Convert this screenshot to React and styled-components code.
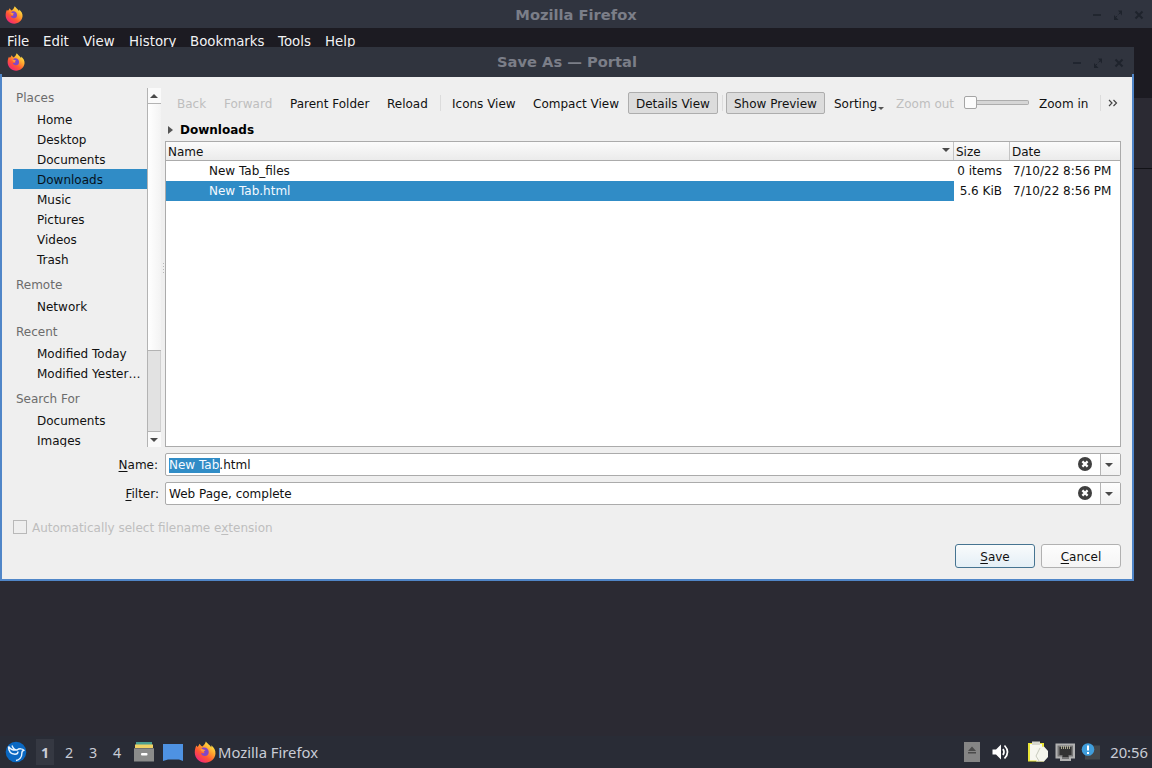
import React from "react";
import styled, { createGlobalStyle, css } from "styled-components";

const places = [
  { title: "Places", items: ["Home", "Desktop", "Documents", "Downloads", "Music", "Pictures", "Videos", "Trash"] },
  { title: "Remote", items: ["Network"] },
  { title: "Recent", items: ["Modified Today", "Modified Yester…"] },
  { title: "Search For", items: ["Documents", "Images"] },
];

const files = [
  { name: "New Tab_files", size: "0 items", date: "7/10/22 8:56 PM" },
  { name: "New Tab.html", size: "5.6 KiB", date: "7/10/22 8:56 PM", selected: true },
];

const menus = [
  ["File", 36],
  ["Edit", 40],
  ["View", 46],
  ["History", 61],
  ["Bookmarks", 88],
  ["Tools", 47],
  ["Help", 40],
];

function FirefoxIcon({ size }) {
  return (
    <svg width={size} height={size} viewBox="0 0 20 20">
      <defs>
        <linearGradient id="fox" x1="0.85" y1="0.1" x2="0.2" y2="0.95">
          <stop offset="0" stopColor="#fff14a" />
          <stop offset="0.35" stopColor="#ffa32e" />
          <stop offset="0.65" stopColor="#ff5634" />
          <stop offset="1" stopColor="#f0247e" />
        </linearGradient>
      </defs>
      <path
        d="M2.2 4.2C2.6 4.6 3 5 3.2 5.5C4 4.9 4.6 3.6 5.2 2.6C5.6 3.7 6.4 4.5 7.6 5C9 3.9 10 2.6 10.8 .4C12 1.9 13 2.8 14.2 3.8C14.8 4.3 15.3 5 15.6 5.8C15.9 5.2 15.8 4.5 15.6 3.8C18.2 5.8 19.8 8.4 19.5 11.5C19 16.3 15 19.7 10.2 19.7C5 19.7 .7 15.7 .7 10.4C.7 8.1 1.2 6 2.2 4.2Z"
        fill="url(#fox)"
      />
      <path
        d="M8 6C10.6 5.200 13.400 6.800 13.400 10C13.400 12.400 11.900 13.600 10 13.600C8 13.600 6.600 12.300 6.400 10.800C7.400 11.400 8.800 11.400 9.800 10.400C8.600 9.800 6.800 9.200 6.600 8C6.800 7.100 7.200 6.500 8 6Z"
        fill="#8147c8"
      />
      <path d="M6 7.400C7.400 7.200 9.400 7.800 10.400 8.600C9.500 8.800 8.900 9.200 8.800 10C7.400 9.900 6.300 9 6 7.400Z" fill="#ff9a3a" />
    </svg>
  );
}

function WindowControls() {
  return (
    <Controls viewBox="0 0 56 12">
      <path d="M2 6h8" stroke="#1e232c" strokeWidth="1.6" />
      <path d="M23 11V6L27.500 11ZM27 1.500H31V6.500Z" fill="#1e232c" />
      <path d="M24 9L30 3" stroke="#1e232c" strokeDasharray="3 2" />
      <path d="M44.500 2.500L51.500 9.500M51.500 2.500L44.500 9.500" stroke="#1e232c" strokeWidth="1.9" />
    </Controls>
  );
}

function Arrow({ up }) {
  return (
    <svg width="8" height="4" viewBox="0 0 8 4">
      <path d={up ? "M0 4L4 0L8 4Z" : "M0 0H8L4 4Z"} fill="#4a4a4a" />
    </svg>
  );
}

function Combo({ children }) {
  return (
    <ComboBox>
      <ComboText>{children}</ComboText>
      <ClearIcon viewBox="0 0 14 14">
        <circle cx="7" cy="7" r="7" fill="#3f3f3f" />
        <path d="M4.400 4.400L9.600 9.600M9.600 4.400L4.400 9.600" stroke="#fff" strokeWidth="2.200" />
      </ClearIcon>
      <ComboArrow>
        <Arrow />
      </ComboArrow>
    </ComboBox>
  );
}

function App() {
  return (
    <Desktop>
      <GlobalStyle />
      <Browser>
        <TitleBar $height={28} $pad={5}>
          <FirefoxIcon size={18} />
          <WindowTitle>Mozilla Firefox</WindowTitle>
          <WindowControls />
        </TitleBar>
        <MenuBar>
          {menus.map(([label, width]) => (
            <MenuItem key={label} $width={width}>{label}</MenuItem>
          ))}
        </MenuBar>
        <TabStrip />
        <NavBar />
        <Page />
      </Browser>

      <Dialog>
        <TitleBar $height={30} $pad={7} $framed>
          <FirefoxIcon size={18} />
          <WindowTitle>Save As — Portal</WindowTitle>
          <WindowControls />
        </TitleBar>
        <DialogBody>
          <Columns>
            <Sidebar>
              <PlaceList>
                {places.map((group, i) => (
                  <React.Fragment key={group.title}>
                    <GroupTitle $first={i === 0}>{group.title}</GroupTitle>
                    {group.items.map((item) => (
                      <Place key={item} $selected={item === "Downloads"}>{item}</Place>
                    ))}
                  </React.Fragment>
                ))}
              </PlaceList>
              <ScrollBar>
                <ScrollButton><Arrow up /></ScrollButton>
                <ScrollTrack />
                <ScrollRest />
                <ScrollButton><Arrow /></ScrollButton>
              </ScrollBar>
            </Sidebar>
            <Grip>
              <svg width="4" height="12" viewBox="0 0 4 12">
                <path d="M2.500 0v12" stroke="#b8b8b8" strokeDasharray="1 2" />
              </svg>
            </Grip>
            <Main>
              <ToolBar>
                <Tool $width={47} $disabled>Back</Tool>
                <Tool $width={66} $disabled>Forward</Tool>
                <Tool $width={97}>Parent Folder</Tool>
                <Tool $width={58}>Reload</Tool>
                <Separator $tight />
                <Tool $width={81}>Icons View</Tool>
                <Tool $width={104}>Compact View</Tool>
                <Tool $width={90} $pressed>Details View</Tool>
                <Separator />
                <Tool $width={99} $pressed>Show Preview</Tool>
                <Tool $width={62}>
                  Sorting
                  <SmallArrow viewBox="0 0 6 3"><path d="M0 0H6L3 3Z" /></SmallArrow>
                </Tool>
                <Tool $width={77} $disabled>Zoom out</Tool>
                <Slider>
                  <Knob />
                  <Groove />
                </Slider>
                <Tool $width={66}>Zoom in</Tool>
                <Separator />
                <More viewBox="0 0 10 8">
                  <path d="M1 1L4 4L1 7M5.500 1L8.500 4L5.500 7" />
                </More>
              </ToolBar>
              <Crumb>
                <svg width="5" height="8" viewBox="0 0 5 8"><path d="M0 0L5 4L0 8Z" fill="#555" /></svg>
                Downloads
              </Crumb>
              <FileList>
                <Header>
                  <HeaderCell>
                    Name
                    <Arrow />
                  </HeaderCell>
                  <HeaderCell>Size</HeaderCell>
                  <HeaderCell>Date</HeaderCell>
                </Header>
                {files.map((file) => (
                  <FileRow key={file.name}>
                    <FileName $selected={file.selected}>{file.name}</FileName>
                    <FileSize>{file.size}</FileSize>
                    <FileDate>{file.date}</FileDate>
                  </FileRow>
                ))}
              </FileList>
            </Main>
          </Columns>
          <Form>
            <Label $inset={1}><u>N</u>ame:</Label>
            <Combo><Marked>New Tab</Marked>.html</Combo>
            <Label $inset={0}><u>F</u>ilter:</Label>
            <Combo>Web Page, complete</Combo>
          </Form>
          <CheckRow>
            <CheckBox />
            <CheckLabel>Automatically select filename e<u>x</u>tension</CheckLabel>
          </CheckRow>
          <Buttons>
            <Button $primary><span><u>S</u>ave</span></Button>
            <Button><span><u>C</u>ancel</span></Button>
          </Buttons>
        </DialogBody>
      </Dialog>

      <TaskBar>
        <Launcher>
          <svg width="22" height="22" viewBox="0 0 22 22">
            <circle cx="11" cy="11" r="10.300" fill="#0a68c2" />
            <path
              d="M3.500 5.500C6 9 9 9.500 12 9C14 7.300 17.500 7.500 18.800 9.200C17.200 9.600 16.800 11 16.800 12.500C17 16 14.500 19 11 19.500M3.500 5.500C3.500 10 6 13 10 13.300C12 13.300 13 12 13 10.500M7 4.500C8 7.500 10 9 12 9"
              fill="none"
              stroke="#e8f4ff"
              strokeWidth="1.400"
            />
          </svg>
        </Launcher>
        <Pager>
          <Workspace $active>1</Workspace>
          <Workspace>2</Workspace>
          <Workspace>3</Workspace>
          <Workspace>4</Workspace>
        </Pager>
        <QuickLaunch>
          <svg width="20" height="20" viewBox="0 0 20 20">
            <path d="M2 0H18V4H2Z" fill="#4b9f91" />
            <path d="M1 2.500H19V6H1Z" fill="#f0d264" />
            <path d="M0 6H20V19.500H0Z" fill="#8b8c8b" />
            <path d="M0 6H20V7H0Z" fill="#6e6f6e" />
            <rect x="7" y="11" width="6.500" height="2.500" rx="1" fill="#fff" />
          </svg>
          <svg width="20" height="17" viewBox="0 0 20 17">
            <path d="M0 0H20V17L16 15.500H5L0 17Z" fill="#4e92e2" />
          </svg>
        </QuickLaunch>
        <Task>
          <FirefoxIcon size={22} />
          Mozilla Firefox
        </Task>
        <Tray>
          <svg width="184" height="24" viewBox="0 0 184 24">
            <rect x="0" y="2" width="16" height="20" fill="#858585" />
            <path d="M4 11L8 6.500L12 11ZM4 12H12V13.500H4Z" fill="#4b4b4b" />
            <path d="M28.500 9.500h3.500l5-5v15l-5-5h-3.500Z" fill="#fff" />
            <path d="M39 9q2 3 0 6M40.500 5.500q6 6.500 0 13" fill="none" stroke="#fff" strokeWidth="1.700" />
            <path d="M64 3H80V21.500H64Z" fill="#e9e536" />
            <path d="M66 4H78V20.500H66Z" fill="#f7f7f0" />
            <path d="M68 1.500H76V5H68Z" fill="#d7d7cd" />
            <path d="M72 8L80 6.500L84 11V17L80 21.500H72L75 17Z" fill="#f4f5ec" />
            <path d="M76 8L72 16L75 21" fill="none" stroke="#c8cbbd" />
            <path d="M92.500 4.500H110V17.500H106V20H97V17.500H92.500Z" fill="#747474" stroke="#b1b1b1" strokeWidth="2" />
            <path d="M95.500 7H107.500V15H104.500V17H98.500V15H95.500Z" fill="#333" />
            <path d="M97.500 6V9M99.500 6V9M101.500 6V9M103.500 6V9M105.500 6V9" stroke="#b9b79c" strokeWidth="0.900" />
            <rect x="121" y="5.500" width="15" height="14" fill="#42464a" />
            <circle cx="124" cy="9.500" r="6.300" fill="#3f9ddb" />
            <path d="M124 5.500V10.500M124 12V14" stroke="#fff" strokeWidth="2" />
          </svg>
          <Clock>20:56</Clock>
        </Tray>
      </TaskBar>
    </Desktop>
  );
}

const GlobalStyle = createGlobalStyle`
  * {
    box-sizing: border-box;
  }

  body {
    margin: 0;
    overflow: hidden;
    font-family: "DejaVu Sans", sans-serif;
    font-size: 12px;
    color: #111;
  }

  svg {
    display: block;
    flex-shrink: 0;
  }

  u {
    text-underline-offset: 2px;
  }
`;

const Desktop = styled.div`
  position: relative;
  width: 1152px;
  height: 768px;
  display: flex;
  flex-direction: column;
  background: #2b2a33;
`;

const Browser = styled.div`
  flex: 1;
  display: flex;
  flex-direction: column;
`;

const frame = css`
  padding-bottom: 1px;
  background:
    linear-gradient(#5086c8, #5086c8) 0 100% / 2px 3px no-repeat,
    linear-gradient(#5086c8, #5086c8) 100% 100% / 2px 3px no-repeat,
    #30343e;
`;

const TitleBar = styled.div`
  height: ${(p) => p.$height}px;
  flex-shrink: 0;
  display: grid;
  grid-template-columns: 60px 1fr 60px;
  align-items: center;
  padding: 1px ${(p) => p.$pad}px 0;
  background: #30343f;
  ${(p) => p.$framed && frame}
`;

const WindowTitle = styled.div`
  text-align: center;
  font-size: 14.67px;
  line-height: 18px;
  font-weight: bold;
  color: #7b7e88;
`;

const Controls = styled.svg`
  width: 56px;
  height: 12px;
  margin: 1px 0 0 4px;
`;

const MenuBar = styled.div`
  height: 28px;
  display: flex;
  padding: 5px 0 0 7px;
  background: #1c1b22;
`;

const MenuItem = styled.div`
  width: ${(p) => p.$width}px;
  font-size: 13.33px;
  line-height: 17px;
  white-space: nowrap;
  color: #f2f2f4;
`;

const TabStrip = styled.div`
  height: 42px;
  background: #1c1b22;
`;

const NavBar = styled.div`
  height: 71px;
  background: #2b2a33;
  border-bottom: 1px solid #121217;
`;

const Page = styled.div`
  flex: 1;
  background: #2b2a33;
`;

const Dialog = styled.div`
  position: absolute;
  left: 0;
  top: 47px;
  width: 1134px;
  height: 534px;
  display: flex;
  flex-direction: column;
`;

const DialogBody = styled.div`
  flex: 1;
  display: flex;
  flex-direction: column;
  padding: 11px 11px 0;
  background: #efefef;
  border: 2px solid #5086c8;
  border-top: 0;
`;

const Columns = styled.div`
  height: 359px;
  display: flex;
`;

const Sidebar = styled.div`
  width: 148px;
  display: flex;
`;

const PlaceList = styled.div`
  width: 134px;
  overflow: hidden;
`;

const GroupTitle = styled.div`
  height: ${(p) => (p.$first ? 21 : 27)}px;
  padding: ${(p) => (p.$first ? 0 : 6)}px 0 0 3px;
  line-height: 20px;
  color: #6c6c6c;
`;

const Place = styled.div`
  height: 20px;
  padding-left: 24px;
  line-height: 22px;
  white-space: nowrap;
  color: ${(p) => (p.$selected ? "#06121c" : "#111")};
  background: ${(p) => (p.$selected ? "#308cc6" : "transparent")};
`;

const ScrollBar = styled.div`
  width: 14px;
  display: flex;
  flex-direction: column;
  border-left: 1px solid #b3b3b3;
`;

const ScrollButton = styled.div`
  height: 15px;
  display: flex;
  align-items: center;
  justify-content: center;
  padding-right: 1px;
  background: #fafafa;
`;

const ScrollTrack = styled.div`
  height: 248px;
  border: solid #b3b3b3;
  border-width: 1px 0;
  background: linear-gradient(90deg, #fff, #f3f3f3);
`;

const ScrollRest = styled.div`
  flex: 1;
  border-bottom: 1px solid #b3b3b3;
  border-right: 1px solid #d0d0d0;
  background: #e2e2e2;
`;

const Grip = styled.div`
  width: 4px;
  padding-top: 175px;
`;

const Main = styled.div`
  flex: 1;
  display: flex;
  flex-direction: column;
`;

const ToolBar = styled.div`
  height: 30px;
  display: flex;
  align-items: center;
  padding-left: 3px;
`;

const Tool = styled.div`
  width: ${(p) => p.$width}px;
  height: 22px;
  flex-shrink: 0;
  display: flex;
  align-items: center;
  padding: 1px 0 0 8px;
  border: 1px solid transparent;
  border-radius: 2px;
  white-space: nowrap;
  color: ${(p) => (p.$disabled ? "#bebebe" : "#111")};

  ${(p) =>
    p.$pressed &&
    css`
      padding-left: 7px;
      border-color: #adadad;
      background: #dcdcdc;
    `}
`;

const SmallArrow = styled.svg`
  width: 6px;
  height: 3px;
  margin: 10px 0 0 1px;
  fill: #555;
`;

const Separator = styled.div`
  width: 1px;
  height: 16px;
  margin: 0 ${(p) => (p.$tight ? 2 : 3)}px 0 4px;
  background: #dcdcdc;
`;

const Slider = styled.div`
  width: 66px;
  height: 14px;
  display: flex;
  align-items: center;
  margin-top: -1px;
`;

const Knob = styled.div`
  width: 13px;
  height: 13px;
  flex-shrink: 0;
  border: 1px solid #a5a5a5;
  border-radius: 2px;
  background: #fcfcfc;
`;

const Groove = styled.div`
  width: 52px;
  height: 5px;
  border: 1px solid #adadad;
  border-left: 0;
  border-radius: 0 2px 2px 0;
  background: #d6d6d6;
`;

const More = styled.svg`
  width: 10px;
  height: 8px;
  margin-left: 4px;
  fill: none;
  stroke: #444;
  stroke-width: 1.2;
`;

const Crumb = styled.div`
  height: 23px;
  display: flex;
  align-items: center;
  gap: 7px;
  padding-left: 3px;
  font-weight: bold;
  color: #000;
`;

const FileList = styled.div`
  flex: 1;
  border: 1px solid #ababab;
  background: #fff;
`;

const columns = css`
  display: grid;
  grid-template-columns: 788px 56px 1fr;
`;

const Header = styled.div`
  ${columns}
  height: 19px;
  border-bottom: 1px solid #ababab;
  background: linear-gradient(#fbfbfb, #ebebeb);
`;

const HeaderCell = styled.div`
  display: flex;
  align-items: center;
  justify-content: space-between;
  padding: 2px 3px 0 2px;
  border-right: 1px solid #c4c4c4;

  svg {
    margin-top: -4px;
  }

  &:last-child {
    border-right: 0;
  }
`;

const FileRow = styled.div`
  ${columns}
  height: 20px;
  line-height: 20px;
`;

const FileName = styled.div`
  padding-left: 43px;
  color: ${(p) => (p.$selected ? "#f4faff" : "#111")};
  background: ${(p) => (p.$selected ? "#308cc6" : "transparent")};
`;

const FileSize = styled.div`
  padding-right: 8px;
  text-align: right;
`;

const FileDate = styled.div`
  padding-left: 3px;
`;

const Form = styled.div`
  display: grid;
  grid-template-columns: 146px 956px;
  column-gap: 6px;
  row-gap: 6px;
  margin-top: 6px;
`;

const Label = styled.div`
  line-height: 24px;
  height: 23px;
  padding-right: ${(p) => p.$inset}px;
  text-align: right;
`;

const ComboBox = styled.div`
  height: 23px;
  display: flex;
  align-items: center;
  padding-left: 3px;
  border: 1px solid #ababab;
  border-radius: 2px;
  background: #fff;
`;

const ComboText = styled.div`
  flex: 1;
  padding-top: 1px;
  line-height: 15px;
`;

const Marked = styled.span`
  display: inline-block;
  padding-right: 1px;
  margin-right: -1px;
  color: #f4faff;
  background: #308cc6;
`;

const ClearIcon = styled.svg`
  width: 14px;
  height: 14px;
  margin-top: -1px;
`;

const ComboArrow = styled.div`
  width: 20px;
  height: 21px;
  margin-left: 8px;
  display: flex;
  align-items: center;
  justify-content: center;
  padding-right: 3px;
  border-left: 1px solid #b5b5b5;
  background: linear-gradient(#fdfdfd, #f2f2f2);
`;

const CheckRow = styled.div`
  display: flex;
  align-items: center;
  gap: 5px;
  height: 16px;
  margin-top: 14px;
  color: #bebebe;
`;

const CheckBox = styled.div`
  width: 14px;
  height: 14px;
  border: 1px solid #b9b9b9;
`;

const CheckLabel = styled.div`
  padding-top: 2px;
`;

const Buttons = styled.div`
  display: flex;
  justify-content: flex-end;
  gap: 6px;
  margin-top: 9px;
`;

const Button = styled.div`
  width: 80px;
  height: 24px;
  display: flex;
  align-items: center;
  justify-content: center;
  padding-top: 2px;
  border: 1px solid ${(p) => (p.$primary ? "#467491" : "#b1b1b1")};
  border-radius: 3px;
  background: ${(p) => (p.$primary ? "linear-gradient(#f9fbfc, #e4eff6)" : "linear-gradient(#fdfdfd, #f5f5f5)")};
`;

const TaskBar = styled.div`
  height: 32px;
  display: flex;
  align-items: center;
  padding: 0 4px 0 5px;
  background: #292c36;
  font-family: "Noto Sans", sans-serif;
  font-size: 14.8px;
  color: #c9ccd6;
`;

const Launcher = styled.div`
  width: 28px;
`;

const Pager = styled.div`
  display: flex;
`;

const Workspace = styled.div`
  width: 18px;
  height: 26px;
  margin: 0 3px;
  line-height: 27px;
  text-align: center;
  font-size: 14.3px;
  font-weight: ${(p) => (p.$active ? "bold" : "normal")};
  background: ${(p) => (p.$active ? "#353842" : "transparent")};
`;

const QuickLaunch = styled.div`
  display: flex;
  align-items: center;
  gap: 9px;
  margin-left: 5px;
`;

const Task = styled.div`
  display: flex;
  align-items: center;
  gap: 2px;
  margin-left: 11px;
`;

const Tray = styled.div`
  width: 184px;
  display: flex;
  align-items: center;
  margin-left: auto;

  svg {
    margin-right: -38px;
  }
`;

const Clock = styled.div`
  width: 38px;
  display: flex;
  justify-content: flex-end;
`;

export default App;
